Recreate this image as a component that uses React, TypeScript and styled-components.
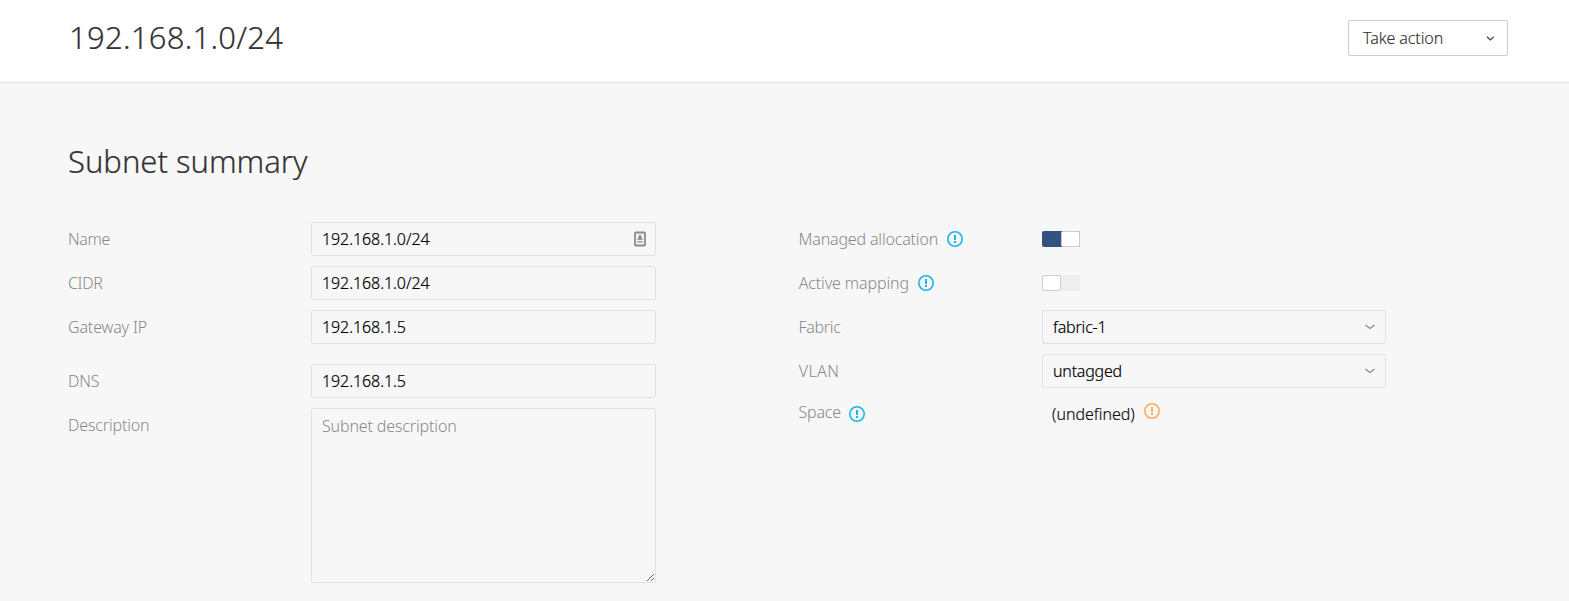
import React from 'react';
import styled, { createGlobalStyle, css } from 'styled-components';

const Global = createGlobalStyle`
  *, *::before, *::after { box-sizing: border-box; }
  body {
    margin: 0;
    background: #f7f7f7;
    color: #333;
    font: 300 16px/24px "Noto Sans", sans-serif;
  }
`;

const Page = styled.div`
  min-height: 601px;
  overflow: hidden;
`;

const Header = styled.header`
  display: flex;
  align-items: flex-start;
  justify-content: space-between;
  height: 83px;
  padding: 20px 61px 0 69px;
  background: #fff;
  border-bottom: 1px solid #e2e2e2;
`;

const heading = css`
  margin: 0;
  font-size: 31px;
  font-weight: 300;
  line-height: 34px;
  color: #333;
  -webkit-text-stroke: 0.2px #333;
`;

const PageTitle = styled.h1`
  ${heading}
  letter-spacing: 0.27px;
`;

const SectionTitle = styled.h2`
  ${heading}
  letter-spacing: -0.03px;
`;

const ActionButton = styled.button`
  display: flex;
  align-items: center;
  justify-content: space-between;
  width: 160px;
  height: 36px;
  padding: 0 13px 0 14px;
  background: #fff;
  border: 1px solid #cdcdcd;
  border-radius: 2px;
  color: #333;
  font: inherit;
  letter-spacing: -0.08px;
  -webkit-text-stroke: 0.15px #333;
`;

const Section = styled.main`
  padding: 61px 0 0 68px;
`;

const Columns = styled.div`
  display: grid;
  grid-template-columns: 588px 588px;
  column-gap: 142px;
  margin-top: 44px;
`;

const Column = styled.div`
  display: flex;
  flex-direction: column;
  gap: 10px;
`;

const Row = styled.div<{ $labelWidth: number; $gapBefore?: number }>`
  display: grid;
  grid-template-columns: ${(p) => p.$labelWidth}px 1fr;
  align-items: start;
  min-height: 34px;
  margin-top: ${(p) => p.$gapBefore ?? 0}px;
`;

const Label = styled.span<{ $track?: number; $height?: number; $indent?: number; $gap?: number }>`
  display: flex;
  align-items: center;
  gap: ${(p) => p.$gap ?? 9}px;
  height: ${(p) => p.$height ?? 34}px;
  padding-left: ${(p) => p.$indent ?? 0}px;
  color: #888;
  letter-spacing: ${(p) => p.$track ?? -0.15}px;
`;

const control = css`
  width: 100%;
  background: #f7f7f7;
  border: 1px solid #e1e1e1;
  border-radius: 2px;
  color: #000;
`;

const Field = styled.div<{ $track?: number }>`
  ${control}
  display: flex;
  align-items: center;
  justify-content: space-between;
  height: 34px;
  padding: 0 9px 0 10px;
  letter-spacing: ${(p) => p.$track ?? -0.08}px;
  -webkit-text-stroke: 0.2px #000;
`;

const TextArea = styled.textarea`
  ${control}
  display: block;
  height: 175px;
  margin: 0;
  padding: 5px 10px;
  font: inherit;
  letter-spacing: -0.14px;
  outline: none;
  resize: vertical;

  &::placeholder {
    color: #888;
    opacity: 1;
  }
`;

const Track = styled.span<{ $on?: boolean }>`
  display: flex;
  justify-content: ${(p) => (p.$on ? 'flex-end' : 'flex-start')};
  width: 38px;
  height: 16px;
  margin-top: 9px;
  border-radius: 2px;
  background: ${(p) => (p.$on ? '#335280' : '#eee')};
`;

const Knob = styled.span`
  width: 19px;
  height: 16px;
  background: #fff;
  border: 1px solid #cdcdcd;
  border-radius: 2px;
`;

const SpaceValue = styled.div`
  display: flex;
  align-items: flex-start;
  gap: 9px;
  padding: 4px 0 0 10px;
  color: #111;
  letter-spacing: -0.03px;
  -webkit-text-stroke: 0.2px #111;
`;

const RaisedIcon = styled.span`
  display: flex;
  margin-top: 1px;
`;

const LowIcon = styled.span`
  display: flex;
  margin-top: 3px;
`;

function Notice({ color = '#19b6ee' }: { color?: string }) {
  return (
    <svg width="16" height="16" viewBox="0 0 16 16" fill="none">
      <circle cx="8" cy="8" r="7.2" stroke={color} strokeWidth="1.6" />
      <path d="M7 4h2v5H7zM7 10h2v2H7z" fill={color} />
    </svg>
  );
}

function ActionChevron() {
  return (
    <svg width="8" height="6" viewBox="0 0 8 6" fill="none">
      <path d="M1 1.8 4.3 4.9 7.6 1.8" stroke="#444" strokeWidth="1.3" />
    </svg>
  );
}

function SelectChevron() {
  return (
    <svg width="12" height="6" viewBox="0 0 12 6" fill="none">
      <path d="M1.4 1 6 4.5 10.6 1" stroke="#888" strokeWidth="1.2" />
    </svg>
  );
}

function ContactCard() {
  return (
    <svg width="12" height="16" viewBox="0 0 12 16" fill="none">
      <rect x="1" y="1.5" width="10" height="13" rx="0.8" fill="#f3f3f3" stroke="#8c8c8c" strokeWidth="1.8" />
      <path d="M6 3.5 7.3 5v1.5L8.6 8v.7H3.4V8l1.3-1.5V5z" fill="#858585" />
      <path d="M3.4 10h5.2v1.7H3.4z" fill="#a8a8a8" />
    </svg>
  );
}

export default function App() {
  return (
    <Page>
      <Global />
      <Header>
        <PageTitle>192.168.1.0/24</PageTitle>
        <ActionButton>
          Take action
          <ActionChevron />
        </ActionButton>
      </Header>
      <Section>
        <SectionTitle>Subnet summary</SectionTitle>
        <Columns>
          <Column>
            <Row $labelWidth={243}>
              <Label $track={-0.35}>Name</Label>
              <Field>
                192.168.1.0/24
                <ContactCard />
              </Field>
            </Row>
            <Row $labelWidth={243}>
              <Label $track={-0.35}>CIDR</Label>
              <Field>192.168.1.0/24</Field>
            </Row>
            <Row $labelWidth={243}>
              <Label>Gateway IP</Label>
              <Field>192.168.1.5</Field>
            </Row>
            <Row $labelWidth={243} $gapBefore={10}>
              <Label>DNS</Label>
              <Field>192.168.1.5</Field>
            </Row>
            <Row $labelWidth={243}>
              <Label>Description</Label>
              <TextArea placeholder="Subnet description" />
            </Row>
          </Column>
          <Column>
            <Row $labelWidth={244}>
              <Label $track={-0.17} $indent={0.5} $gap={8.8}>
                Managed allocation
                <Notice />
              </Label>
              <Track $on>
                <Knob />
              </Track>
            </Row>
            <Row $labelWidth={244}>
              <Label $track={-0.12} $indent={0.7} $gap={8.8}>
                Active mapping
                <Notice />
              </Label>
              <Track>
                <Knob />
              </Track>
            </Row>
            <Row $labelWidth={244}>
              <Label $track={-0.3} $indent={0.5}>Fabric</Label>
              <Field $track={-0.2}>
                fabric-1
                <SelectChevron />
              </Field>
            </Row>
            <Row $labelWidth={244}>
              <Label $track={0.4} $indent={0.7}>VLAN</Label>
              <Field $track={-0.22}>
                untagged
                <SelectChevron />
              </Field>
            </Row>
            <Row $labelWidth={244}>
              <Label $track={-0.2} $height={28} $indent={0.5} $gap={8}>
                Space
                <LowIcon>
                  <Notice />
                </LowIcon>
              </Label>
              <SpaceValue>
                (undefined)
                <RaisedIcon>
                  <Notice color="#f7b055" />
                </RaisedIcon>
              </SpaceValue>
            </Row>
          </Column>
        </Columns>
      </Section>
    </Page>
  );
}
